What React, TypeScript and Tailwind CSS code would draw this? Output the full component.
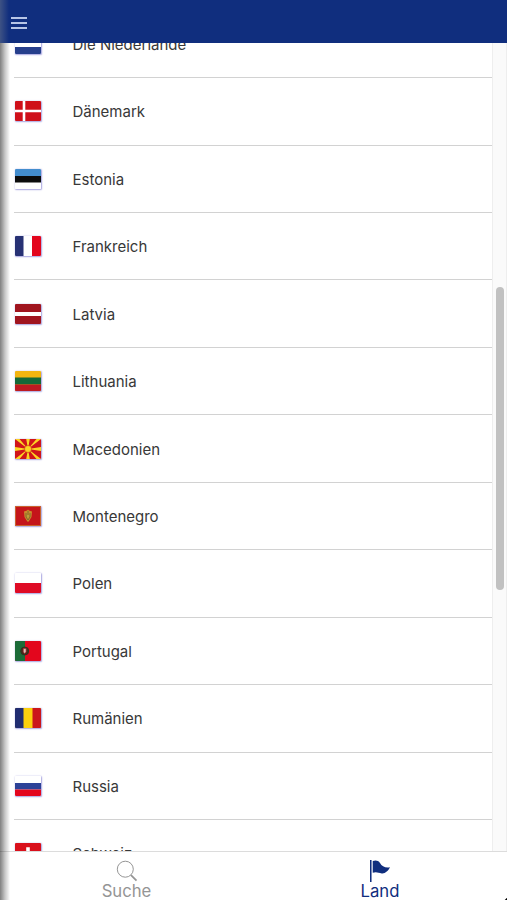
import type { ReactNode } from "react";

const countries: { name: string; flag: ReactNode }[] = [
  {
    name: "Die Niederlande",
    flag: (
      <>
        <rect width="26" height="20" fill="#fff" />
        <rect width="26" height="7" fill="#ae1c28" />
        <rect y="13" width="26" height="7" fill="#263f8c" />
      </>
    ),
  },
  {
    name: "Dänemark",
    flag: (
      <>
        <rect width="26" height="20" fill="#cf101a" />
        <path d="M9 0V20M0 10H26" stroke="#fff" strokeWidth="2.6" />
      </>
    ),
  },
  {
    name: "Estonia",
    flag: (
      <>
        <rect width="26" height="20" fill="#fff" />
        <rect width="26" height="7" fill="#438dce" />
        <rect y="7" width="26" height="6.5" fill="#0c0c0c" />
      </>
    ),
  },
  {
    name: "Frankreich",
    flag: (
      <>
        <rect width="26" height="20" fill="#fff" />
        <rect width="8.5" height="20" fill="#273174" />
        <rect x="17" width="9" height="20" fill="#e3061d" />
      </>
    ),
  },
  {
    name: "Latvia",
    flag: (
      <>
        <rect width="26" height="20" fill="#a0151f" />
        <rect y="8" width="26" height="4" fill="#fff" />
      </>
    ),
  },
  {
    name: "Lithuania",
    flag: (
      <>
        <rect width="26" height="20" fill="#f3b510" />
        <rect y="6.5" width="26" height="7" fill="#146939" />
        <rect y="13.5" width="26" height="6.5" fill="#bd1a22" />
      </>
    ),
  },
  {
    name: "Macedonien",
    flag: (
      <>
        <rect width="26" height="20" fill="#d0141a" />
        <path
          d="M0 0H4.5L13 10ZM26 0H21.5L13 10ZM0 20H4.5L13 10ZM26 20H21.5L13 10ZM11.2 0H14.8L13 10ZM11.2 20H14.8L13 10ZM0 8V12L13 10ZM26 8V12L13 10Z"
          fill="#fbd424"
        />
        <circle cx="13" cy="10" r="3.5" fill="#fbd424" stroke="#d0141a" strokeWidth="0.5" />
      </>
    ),
  },
  {
    name: "Montenegro",
    flag: (
      <>
        <rect width="26" height="20" fill="#c4151a" />
        <rect x="0.5" y="0.5" width="25" height="19" fill="none" stroke="#c9632d" />
        <path
          d="M12 4.5 13 3.5 14 4.5 17 5.5 16.5 11 14 15 13 16 12 15 9.5 11 9 5.5Z"
          fill="#c98b2b"
        />
        <path d="M11 7V11L13 14 15 11V7M13 5V9" fill="none" stroke="#6c6430" strokeWidth="0.8" />
        <path d="M12 9H14V11.5H12Z" fill="#b6a43a" />
      </>
    ),
  },
  {
    name: "Polen",
    flag: (
      <>
        <rect width="26" height="20" fill="#fff" />
        <rect y="10" width="26" height="10" fill="#df0b25" />
      </>
    ),
  },
  {
    name: "Portugal",
    flag: (
      <>
        <rect width="26" height="20" fill="#e3061d" />
        <rect width="10" height="20" fill="#1c6b38" />
        <circle cx="9.7" cy="10" r="4" fill="#4b281b" stroke="#2d3420" />
        <path d="M8.3 7.5H11.1V11L9.7 12.5 8.3 11Z" fill="#d9c2b6" stroke="#b4182a" strokeWidth="0.6" />
      </>
    ),
  },
  {
    name: "Rumänien",
    flag: (
      <>
        <rect width="26" height="20" fill="#fbd00e" />
        <rect width="8.5" height="20" fill="#202c70" />
        <rect x="17.5" width="8.5" height="20" fill="#cb151b" />
      </>
    ),
  },
  {
    name: "Russia",
    flag: (
      <>
        <rect width="26" height="20" fill="#fff" />
        <rect y="7" width="26" height="6.5" fill="#2c4297" />
        <rect y="13.5" width="26" height="6.5" fill="#e3061d" />
      </>
    ),
  },
  {
    name: "Schweiz",
    flag: (
      <>
        <rect width="26" height="20" fill="#d9101c" />
        <path d="M13 4.2V15.8M7.2 10H18.8" stroke="#fff" strokeWidth="3.6" />
      </>
    ),
  },
];

function CountryRow({ name, flag }: { name: string; flag: ReactNode }) {
  return (
    <li className="flex h-[67.45px] shrink-0 items-center border-b border-[#d2d2d2] pl-px">
      <svg
        viewBox="0 0 26 20"
        className="mr-[31.5px] h-5 w-[26px] rounded-[1px] shadow-[0.5px_0.5px_1.5px_0.5px_#a8a5e0]"
      >
        {flag}
      </svg>
      <span className="pt-0.5 text-[15px] leading-5 text-[#383838]">{name}</span>
    </li>
  );
}

export default function App() {
  return (
    <div className="relative flex h-[900px] w-[507px] flex-col overflow-hidden bg-white font-['Inter','Liberation_Sans',sans-serif]">
      <header className="flex h-[43px] shrink-0 items-center bg-[#102e7e] pl-[11px] pt-0.5">
        <button aria-label="Menu" className="flex flex-col gap-[3px]">
          <span className="h-0.5 w-4 bg-[#b7c5e6]" />
          <span className="h-0.5 w-4 bg-[#b7c5e6]" />
          <span className="h-0.5 w-4 bg-[#b7c5e6]" />
        </button>
      </header>

      <main className="flex h-[808px] shrink-0 overflow-hidden">
        <ul className="-mt-[32.3px] ml-3.5 flex w-[478px] flex-col">
          {countries.map((country) => (
            <CountryRow key={country.name} {...country} />
          ))}
        </ul>
        <div className="flex w-[15px] justify-center border-x border-[#eeeeee] bg-[#fafafa]">
          <div className="mt-[244px] h-[303px] w-2 rounded-full bg-[#c1c1c1]" />
        </div>
      </main>

      <nav className="flex flex-1 border-t border-[#dcdcdc] bg-white text-[16.7px] leading-[18px]">
        <a className="flex w-[253px] flex-col items-center pt-2 text-[#959595]">
          <svg viewBox="0 0 22 22" className="h-[22px] w-[22px]" fill="none" stroke="currentColor">
            <circle cx="9.3" cy="9.2" r="8" strokeWidth="1" />
            <path d="M15 15.2 20.5 20.7" strokeWidth="1.7" />
          </svg>
          Suche
        </a>
        <a className="flex w-[254px] flex-col items-center pt-2 text-[#102e7e]">
          <svg viewBox="0 0 22 24" className="h-[22px] w-5" fill="currentColor">
            <path d="M0 0H1.7V24H0Z" />
            <path d="M3 1C6 0 9 .2 11 3.2 13 7 17 9 22 8 20 12 17 15 13 14.7 9 14 7 12.5 3 14Z" />
          </svg>
          Land
        </a>
      </nav>

      {/* drawer edge shadow */}
      <div className="pointer-events-none absolute bottom-0 left-0 top-[43px] w-[10px] bg-linear-to-r from-black/50 via-black/22 to-transparent" />
      <div className="pointer-events-none absolute left-0 top-0 h-[43px] w-[9px] bg-linear-to-r from-[#5c6a88]/60 to-transparent" />
      <div className="absolute -bottom-1 -right-1 size-1.5 rotate-45 bg-black" />
    </div>
  );
}
